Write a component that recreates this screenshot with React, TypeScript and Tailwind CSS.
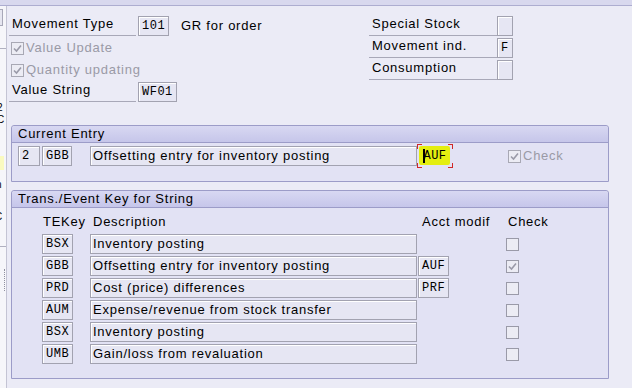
import React from "react";

const font = { fontFamily: '"Liberation Sans", Arial, sans-serif' };
const mono = { fontFamily: '"Liberation Mono", "DejaVu Sans Mono", monospace' };

function Box({ w, children, className = "" }: { w: string; children?: React.ReactNode; className?: string }) {
  return (
    <div
      className={`${w} h-[20px] border border-[#a2a2b0] bg-[#e6e6f3] flex items-center pl-[3px] text-[12px] tracking-[0.5px] text-black shrink-0 shadow-[inset_1px_1px_0_#ffffff] ${className}`}
      style={mono}
    >
      {children}
    </div>
  );
}

function DescBox({ children }: { children?: React.ReactNode }) {
  return (
    <div className="w-[327px] h-[20px] border border-[#a2a2b0] bg-[#e6e6f3] flex items-center pl-[2px] text-[13px] tracking-[0.75px] text-black shrink-0 shadow-[inset_1px_1px_0_#ffffff] whitespace-nowrap overflow-hidden">
      {children}
    </div>
  );
}

function Check({ checked, dim }: { checked?: boolean; dim?: boolean }) {
  return (
    <div className={`w-[13px] h-[13px] border ${dim ? "border-[#a8a8b4]" : "border-[#9a9aa8]"} bg-[#ececf4] flex items-center justify-center shrink-0`}>
      {checked && (
        <svg width="11" height="11" viewBox="0 0 11 11">
          <path d="M2 5.5 L4.5 8 L9 2.5" fill="none" stroke="#9a9aa8" strokeWidth="1.6" />
        </svg>
      )}
    </div>
  );
}

function Label({ w, children }: { w: string; children: React.ReactNode }) {
  return (
    <div className={`${w} h-[20px] border-b border-[#a8a8b8] flex items-end pb-[2px] pl-[3px] text-[13px] tracking-[0.75px] text-black shrink-0 whitespace-nowrap`}>
      {children}
    </div>
  );
}

function GroupHeader({ children }: { children: React.ReactNode }) {
  return (
    <div className="h-[17px] bg-gradient-to-b from-[#d8d8f2] to-[#c6c6ea] border-b border-[#9c9cc8] rounded-t-[3px] flex items-center pl-[6px] text-[13px] tracking-[0.75px] text-black shrink-0">
      {children}
    </div>
  );
}

const rows = [
  { key: "BSX", desc: "Inventory posting", acct: "", checked: false },
  { key: "GBB", desc: "Offsetting entry for inventory posting", acct: "AUF", checked: true },
  { key: "PRD", desc: "Cost (price) differences", acct: "PRF", checked: false },
  { key: "AUM", desc: "Expense/revenue from stock transfer", acct: "", checked: false },
  { key: "BSX", desc: "Inventory posting", acct: "", checked: false },
  { key: "UMB", desc: "Gain/loss from revaluation", acct: "", checked: false },
];

export default function App() {
  return (
    <div className="w-[632px] h-[388px] bg-[#ebebf6] flex flex-col overflow-hidden text-black" style={font}>
      <div className="h-[6px] bg-[#d8d8ee] border-b border-[#adadd0] shrink-0" />
      <div className="flex flex-1 min-h-0">
        {/* cut-off left panel */}
        <div className="w-[7px] bg-[#f6f6fa] border-r border-[#c4c4d4] relative overflow-hidden shrink-0 text-[10px] leading-none">
          <div className="absolute left-0 top-[3px] w-[3px] h-[17px] border border-l-0 border-[#a8a8b8] bg-[#e6e6f0]" />
          <div className="absolute left-0 top-[42px] w-[7px] h-px bg-[#b0b0c0]" />
          <div className="absolute left-[-3px] top-[97px]">2</div>
          <div className="absolute left-[-3px] top-[109px]">C</div>
          <div className="absolute left-0 top-[150px] w-[4px] h-[14px] bg-[#fafac0]" />
          <div className="absolute left-[-4px] top-[174px]">n</div>
          <div className="absolute left-[-3px] top-[190px]">t</div>
          <div className="absolute left-[-5px] top-[206px]">C</div>
          <div className="absolute left-0 top-[240px] w-[7px] h-px bg-[#b0b0c0]" />
          <div className="absolute left-[4px] top-[263px] w-px h-[22px] border-l border-dotted border-[#9090a0]" />
        </div>

        <div className="flex-1 flex flex-col pl-[2px]">
          {/* top fields */}
          <div className="flex pt-[10px] h-[119px] shrink-0">
            <div className="flex flex-col w-[360px] gap-[2px]">
              <div className="flex items-center h-[20px]">
                <Label w="w-[127px]">Movement Type</Label>
                <Box w="w-[31px] ml-[2px]">101</Box>
                <span className="ml-[12px] text-[13px] tracking-[0.75px]">GR for order</span>
              </div>
              <div className="flex items-center h-[20px] pl-[2px] gap-[2px] text-[13px] tracking-[0.75px] text-[#9a9aa6]">
                <Check checked dim />
                <span>Value Update</span>
              </div>
              <div className="flex items-center h-[20px] pl-[2px] gap-[2px] text-[13px] tracking-[0.75px] text-[#9a9aa6]">
                <Check checked dim />
                <span>Quantity updating</span>
              </div>
              <div className="flex items-center h-[20px]">
                <Label w="w-[127px]">Value String</Label>
                <Box w="w-[39px] ml-[2px]">WF01</Box>
              </div>
            </div>
            <div className="flex flex-col gap-[2px]">
              {[
                ["Special Stock", ""],
                ["Movement ind.", "F"],
                ["Consumption", ""],
              ].map(([l, v]) => (
                <div key={l} className="flex items-center h-[20px]">
                  <Label w="w-[128px]">{l}</Label>
                  <Box w="w-[16px]">{v}</Box>
                </div>
              ))}
            </div>
          </div>

          {/* Current Entry */}
          <div className="ml-[2px] w-[598px] h-[57px] border border-[#9c9cc8] rounded-t-[3px] bg-[#e2e2f4] flex flex-col shrink-0">
            <GroupHeader>Current Entry</GroupHeader>
            <div className="flex items-center pl-[6px] pt-[1px]">
              <Box w="w-[22px]">2</Box>
              <Box w="w-[30px] ml-[2px]">GBB</Box>
              <div className="ml-[18px]">
                <DescBox>Offsetting entry for inventory posting</DescBox>
              </div>
              <div className="relative w-[36px] h-[24px] ml-0 flex items-center justify-center">
                <div className="absolute left-[2px] top-[2px] w-[31px] h-[19px] bg-[#e4ee10] rounded-[2px]" />
                <div className="absolute left-0 top-0 w-[5px] h-[5px] border-l border-t border-[#d02828]" />
                <div className="absolute right-0 top-0 w-[5px] h-[5px] border-r border-t border-[#d02828]" />
                <div className="absolute left-0 bottom-0 w-[5px] h-[5px] border-l border-b border-[#d02828]" />
                <div className="absolute right-0 bottom-0 w-[5px] h-[5px] border-r border-b border-[#d02828]" />
                <span className="relative text-[12px] tracking-[0.5px] text-black flex items-center" style={mono}>
                  <span className="w-[2px] h-[14px] bg-black mr-[-2px]" />AUF
                </span>
              </div>
              <div className="ml-[55px] flex items-center gap-[2px] text-[13px] tracking-[0.75px] text-[#9a9aa6]">
                <Check checked dim />
                <span>Check</span>
              </div>
            </div>
          </div>

          {/* Trans/Event Key */}
          <div className="ml-[2px] mt-[8px] w-[598px] h-[189px] border border-[#9c9cc8] rounded-t-[3px] bg-[#e2e2f4] flex flex-col shrink-0">
            <GroupHeader>Trans./Event Key for String</GroupHeader>
            <div className="flex items-center h-[24px] text-[13px] tracking-[0.75px] pt-[3px] shrink-0">
              <span className="ml-[31px] w-[50px]">TEKey</span>
              <span className="w-[329px]">Description</span>
              <span className="w-[86px]">Acct modif</span>
              <span>Check</span>
            </div>
            <div className="flex flex-col gap-[2px] pt-[2px]">
              {rows.map((r, i) => (
                <div key={i} className="flex items-center h-[20px] pl-[30px]">
                  <Box w="w-[31px]">{r.key}</Box>
                  <div className="ml-[17px]">
                    <DescBox>{r.desc}</DescBox>
                  </div>
                  <div className="w-[32px] ml-[1px]">
                    {r.acct && <Box w="w-[31px]">{r.acct}</Box>}
                  </div>
                  <div className="ml-[56px]">
                    <Check checked={r.checked} />
                  </div>
                </div>
              ))}
            </div>
          </div>
        </div>
      </div>
    </div>
  );
}
